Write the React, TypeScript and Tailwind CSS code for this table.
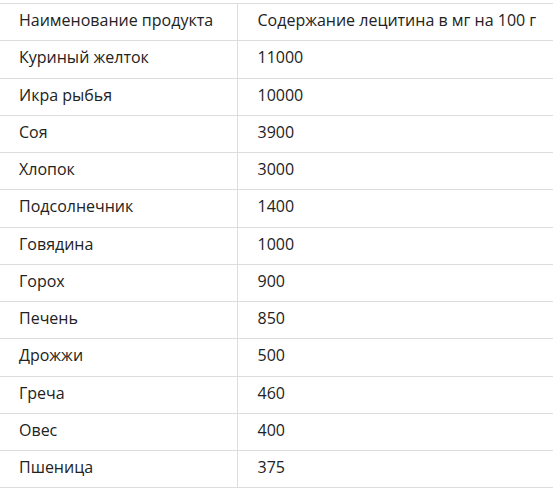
const rows: [string, string][] = [
  ["Куриный желток", "11000"],
  ["Икра рыбья", "10000"],
  ["Соя", "3900"],
  ["Хлопок", "3000"],
  ["Подсолнечник", "1400"],
  ["Говядина", "1000"],
  ["Горох", "900"],
  ["Печень", "850"],
  ["Дрожжи", "500"],
  ["Греча", "460"],
  ["Овес", "400"],
  ["Пшеница", "375"],
];

export default function App() {
  return (
    <div className="bg-white pt-[3px] font-['Open_Sans',sans-serif] text-[16px] leading-[22.25px] text-[#222]">
      <table className="w-[553px] table-fixed border-collapse">
        <thead>
          <tr className="border-y border-[#dddddd]">
            <td className="w-[237px] whitespace-nowrap border-r border-[#dddddd] px-[19px] pt-[5px] pb-[9px] text-left font-normal">
              Наименование продукта
            </td>
            <td className="whitespace-nowrap pl-5 pr-0 pt-[5px] pb-[9px] text-left font-normal">
              Содержание лецитина в мг на 100 г
            </td>
          </tr>
        </thead>
        <tbody>
          {rows.map(([name, value]) => (
            <tr key={name} className="border-b border-[#dddddd]">
              <td className="border-r border-[#dddddd] px-[19px] pt-[5px] pb-[9px]">{name}</td>
              <td className="px-5 pt-[5px] pb-[9px]">{value}</td>
            </tr>
          ))}
        </tbody>
      </table>
    </div>
  );
}
